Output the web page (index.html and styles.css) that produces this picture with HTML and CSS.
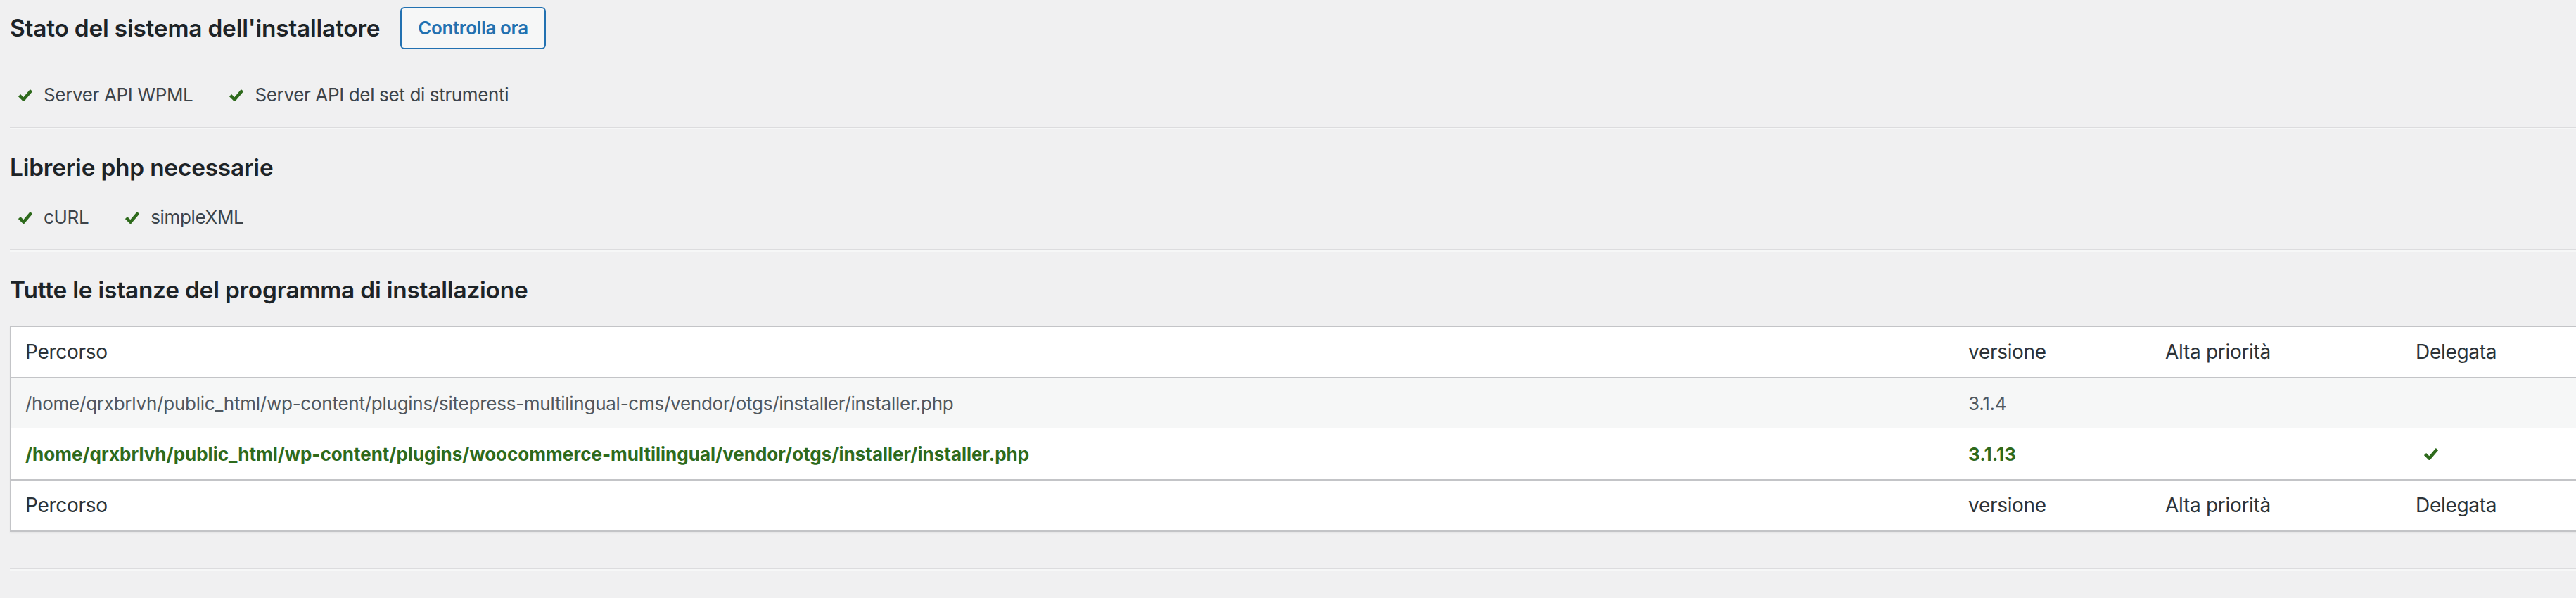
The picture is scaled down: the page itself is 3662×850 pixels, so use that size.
FILE: index.html
```html
<!DOCTYPE html>
<html lang="it">
<head>
<meta charset="utf-8">
<title>Stato del sistema dell'installatore</title>
<link rel="stylesheet" href="styles.css">
</head>
<body>
<div class="wrap">
  <div class="title-row">
    <h2 class="section-title">Stato del sistema dell'installatore</h2>
    <button class="btn" type="button">Controlla ora</button>
  </div>
  <ul class="checks checks-first">
    <li class="check-item"><svg class="ok" viewBox="0 0 20 17"><path d="M1.5 8.5 L7.5 14.5 L18.5 1.5"/></svg><span>Server API WPML</span></li>
    <li class="check-item"><svg class="ok" viewBox="0 0 20 17"><path d="M1.5 8.5 L7.5 14.5 L18.5 1.5"/></svg><span>Server API del set di strumenti</span></li>
  </ul>
  <hr class="sep">

  <h2 class="section-title">Librerie php necessarie</h2>
  <ul class="checks">
    <li class="check-item"><svg class="ok" viewBox="0 0 20 17"><path d="M1.5 8.5 L7.5 14.5 L18.5 1.5"/></svg><span>cURL</span></li>
    <li class="check-item"><svg class="ok" viewBox="0 0 20 17"><path d="M1.5 8.5 L7.5 14.5 L18.5 1.5"/></svg><span>simpleXML</span></li>
  </ul>
  <hr class="sep">

  <h2 class="section-title">Tutte le istanze del programma di installazione</h2>
  <table class="instances">
    <colgroup>
      <col class="c-path"><col class="c-ver"><col class="c-prio"><col class="c-del">
    </colgroup>
    <thead>
      <tr><th>Percorso</th><th>versione</th><th>Alta priorità</th><th>Delegata</th></tr>
    </thead>
    <tbody>
      <tr class="alt">
        <td>/home/qrxbrlvh/public_html/wp-content/plugins/sitepress-multilingual-cms/vendor/otgs/installer/installer.php</td>
        <td>3.1.4</td><td></td><td></td>
      </tr>
      <tr class="active">
        <td>/home/qrxbrlvh/public_html/wp-content/plugins/woocommerce-multilingual/vendor/otgs/installer/installer.php</td>
        <td>3.1.13</td><td></td>
        <td><svg class="ok ok-cell" viewBox="0 0 20 17"><path d="M1.5 8.5 L7.5 14.5 L18.5 1.5"/></svg></td>
      </tr>
    </tbody>
    <tfoot>
      <tr><th>Percorso</th><th>versione</th><th>Alta priorità</th><th>Delegata</th></tr>
    </tfoot>
  </table>
  <hr class="sep sep-last">
  <h2 class="section-title">Registro dell'installatore</h2>
</div>
</body>
</html>
```
FILE: styles.css
```css
html, body {
  margin: 0;
  padding: 0;
  background: #f0f0f1;
  overflow: hidden;
}
body {
  font-family: Inter, "Noto Sans", "Liberation Sans", sans-serif;
  color: #3c434a;
  font-size: 26px;
  line-height: 1.5;
}
.wrap {
  padding-left: 14px;
}
.title-row {
  display: flex;
  align-items: center;
  gap: 29px;
  margin-top: 10px;
  height: 60px;
}
.section-title {
  margin: 0;
  font-size: 33.4px;
  font-weight: 600;
  line-height: 44px;
  color: #1d2327;
  letter-spacing: -0.2px;
}
.btn {
  font-family: Inter, "Noto Sans", "Liberation Sans", sans-serif;
  font-size: 26px;
  font-weight: 600;
  color: #2271b1;
  background: #f6f7f7;
  border: 2px solid #2271b1;
  border-radius: 6px;
  height: 60px;
  padding: 0 23px;
  line-height: 56px;
  letter-spacing: -0.4px;
}
.checks {
  list-style: none;
  margin: 29px 0 0;
  padding: 0 0 0 12px;
  display: flex;
  gap: 52px;
  height: 40px;
  align-items: center;
  letter-spacing: -0.35px;
}
.checks-first {
  margin-top: 45px;
}
.check-item {
  display: flex;
  align-items: center;
  gap: 16px;
  line-height: 40px;
}
.ok {
  width: 20px;
  height: 17px;
  fill: none;
  stroke: #2e6a1c;
  stroke-width: 4.5;
  stroke-linecap: butt;
  stroke-linejoin: miter;
}
.sep {
  border: 0;
  border-top: 2px solid #dcdcde;
  border-bottom: 2px solid #f6f7f7;
  height: 0;
  margin: 25px 0 32px;
}
.instances {
  margin-top: 29px;
  width: 3718px;
  table-layout: fixed;
  border-collapse: separate;
  border-spacing: 0;
  background: #fff;
  border: 2px solid #c3c4c7;
  box-shadow: 0 2px 2px rgba(0, 0, 0, 0.04);
}
.c-path { width: 2762px; }
.c-ver { width: 280px; }
.c-prio { width: 356px; }
.c-del { width: 320px; }
.instances th {
  text-align: left;
  font-weight: 400;
  font-size: 28px;
  line-height: 39px;
  color: #2c3338;
  padding: 16px 20px;
  letter-spacing: -0.3px;
}
.instances thead th {
  border-bottom: 2px solid #c3c4c7;
}
.instances tfoot th {
  border-top: 2px solid #c3c4c7;
}
.instances td {
  font-size: 26px;
  line-height: 39px;
  padding: 16px 20px;
  color: #50575e;
  vertical-align: middle;
  letter-spacing: -0.25px;
}
.instances tr.alt td {
  background: #f6f7f7;
}
.instances tr.active td {
  color: #2e6a1c;
  font-weight: 700;
  padding-top: 17px;
  letter-spacing: 0;
}
.ok-cell {
  display: block;
  margin-left: 12px;
}
.sep-last {
  margin-top: 51px;
}
```
